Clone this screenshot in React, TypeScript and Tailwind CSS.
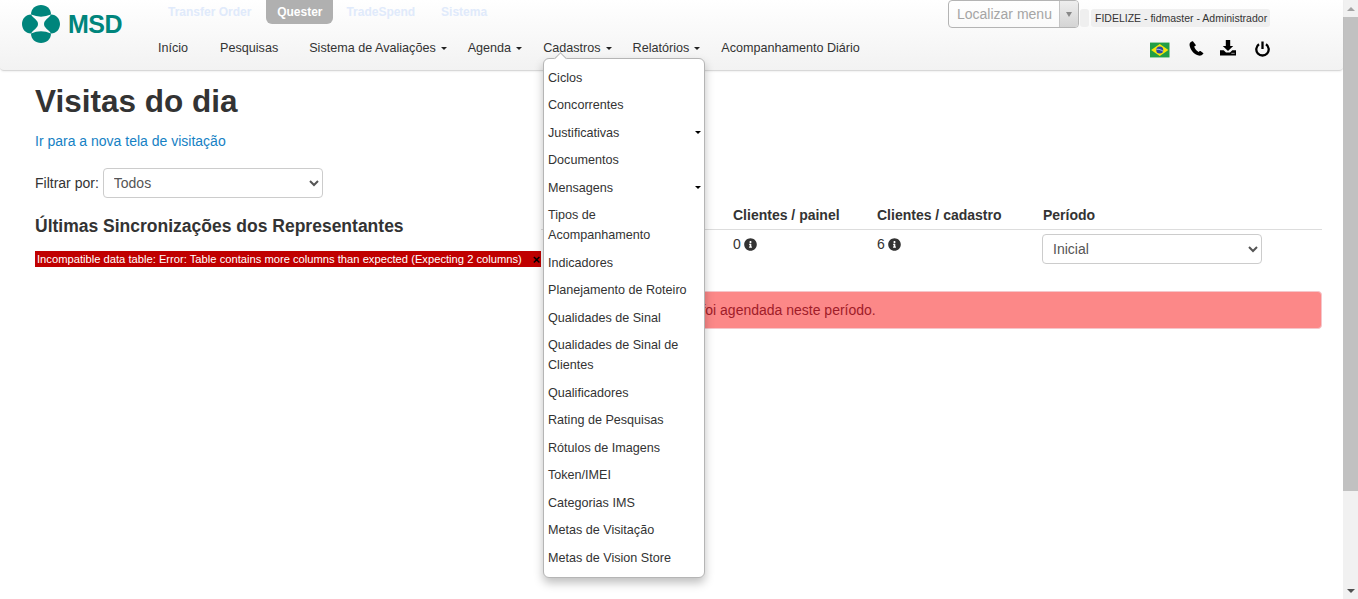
import { FaInfoCircle } from 'react-icons/fa';

const tabs = [
  { label: 'Transfer Order', cls: 'ml-[46px]' },
  { label: 'Quester', active: true, cls: 'ml-[15px]' },
  { label: 'TradeSpend', cls: 'ml-[13px]' },
  { label: 'Sistema', cls: 'ml-[26px]' },
];

const navItems = [
  { label: 'Início', cls: 'ml-[36px]' },
  { label: 'Pesquisas', cls: 'ml-[32px]' },
  { label: 'Sistema de Avaliações', caret: true, cls: 'ml-[31px]' },
  { label: 'Agenda', caret: true, cls: 'ml-[21px]' },
  { label: 'Cadastros', caret: true, cls: 'ml-[21px]' },
  { label: 'Relatórios', caret: true, cls: 'ml-[21px]' },
  { label: 'Acompanhamento Diário', cls: 'ml-[21px]' },
];

const menuItems = [
  { label: 'Ciclos' },
  { label: 'Concorrentes' },
  { label: 'Justificativas', sub: true },
  { label: 'Documentos' },
  { label: 'Mensagens', sub: true },
  { label: 'Tipos de Acompanhamento' },
  { label: 'Indicadores' },
  { label: 'Planejamento de Roteiro' },
  { label: 'Qualidades de Sinal' },
  { label: 'Qualidades de Sinal de Clientes' },
  { label: 'Qualificadores' },
  { label: 'Rating de Pesquisas' },
  { label: 'Rótulos de Imagens' },
  { label: 'Token/IMEI' },
  { label: 'Categorias IMS' },
  { label: 'Metas de Visitação' },
  { label: 'Metas de Vision Store' },
];

function Caret() {
  return <span className="ml-[5px] inline-block h-0 w-0 border-x-[3px] border-t-[3px] border-x-transparent border-t-[#222] align-middle" />;
}

function Logo() {
  return (
    <div className="flex items-center">
      <svg width="38" height="38" viewBox="0 0 38 38" className="shrink-0">
        <g fill="#00857c">
          <path d="M9 9.500C9 3.800 13.500 0 19 0s10 3.800 10 9.500Q19 13.800 9 9.500z" />
          <path d="M9 28.500C9 34.200 13.500 38 19 38s10-3.800 10-9.500Q19 24.200 9 28.500z" />
          <path d="M9 9.500C3.500 9.500 0 14 0 19s3.500 9.500 9 9.500C11 25 16 23 16 19S11 13 9 9.500z" />
          <path d="M29 9.500C34.500 9.500 38 14 38 19s-3.500 9.500-9 9.500C27 25 22 23 22 19S27 13 29 9.500z" />
        </g>
      </svg>
      <span className="ml-[8px] text-[25px] font-bold leading-none tracking-[-0.5px] text-[#00857c]">MSD</span>
    </div>
  );
}

function Flag() {
  return (
    <svg width="21" height="16" viewBox="0 0 21 16">
      <rect width="21" height="16" fill="#229e45" />
      <path d="M10.500 1.500 19.800 8l-9.300 6.500L1.200 8z" fill="#f8e509" />
      <circle cx="10.500" cy="8" r="3.800" fill="#2b49a3" />
      <path d="M7 7.300c2.500-.3 5 .5 7 2" stroke="#fff" strokeWidth="0.7" fill="none" />
    </svg>
  );
}

function PhoneIcon() {
  return (
    <svg width="15" height="15" viewBox="0 0 15 15">
      <path d="M3.200.2C1.300.8.200 2.400.6 4.400c.9 4.900 4.600 9 9.200 10.200 1.500.3 3.300-.3 4.500-1.800.2-.3.100-.6-.2-.8l-2.600-1.900c-.3-.2-.6-.2-.8 0l-1 1c-2.100-1-3.900-3.300-4.500-5.500l1.300-.9c.3-.2.4-.5.300-.8L4.100.5c-.1-.3-.6-.4-.9-.3z" fill="#000" />
    </svg>
  );
}

function DownloadIcon() {
  return (
    <svg width="16" height="16" viewBox="0 0 16 16">
      <path d="M5.800 0h4.400v6h3L8 11 2.800 6h3z" fill="#000" />
      <path d="M0 10.200h3.700L6 12.500h4l2.300-2.300H16V15.500H0z" fill="#000" />
      <rect x="11.600" y="12.800" width="1" height="1" fill="#fff" />
      <rect x="13.400" y="12.800" width="1" height="1" fill="#fff" />
    </svg>
  );
}

function PowerIcon() {
  return (
    <svg width="15" height="16" viewBox="0 0 15 16" fill="none" stroke="#000" strokeWidth="2.300">
      <path d="M7.500.5v7.500" />
      <path d="M4 3.200a6.200 6.200 0 1 0 7 0" />
    </svg>
  );
}

function CadastrosMenu() {
  return (
    <div className="absolute left-[543px] top-[58px] z-20 h-[520px] w-[162px] rounded-[6px] border border-[#b5b5b5] bg-white pt-[4.750px] text-[12.600px] text-[#333] shadow-[0_5px_10px_rgba(0,0,0,0.25)]">
      <span className="absolute left-[12px] top-[-5px] h-[9px] w-[9px] rotate-45 border-l border-t border-[#b5b5b5] bg-white" />
      {menuItems.map((item) => (
        <div key={item.label} className="relative py-[3.750px] pl-[4px] pr-[12px] leading-5">
          {item.label}
          {item.sub && (
            <span className="absolute right-[3px] top-[12px] h-0 w-0 border-x-[3px] border-t-[3px] border-x-transparent border-t-black" />
          )}
        </div>
      ))}
    </div>
  );
}

function Header() {
  return (
    <header className="relative h-[71px] rounded-b-[4px] border-b border-[#d8d8d8] bg-gradient-to-b from-white to-[#f2f2f2] shadow-[0_1px_2px_rgba(0,0,0,0.06)]">
      <div className="flex">
        <div className="ml-[22px] mt-[5px] w-[100px]">
          <Logo />
        </div>
        <div className="flex-1">
          <div className="flex h-[24px] items-center text-[12px] font-bold">
            {tabs.map((t) => (
              <span
                key={t.label}
                className={
                  t.active
                    ? `${t.cls} flex h-[24px] w-[67px] items-center justify-center rounded-b-[6px] bg-[#b0b0b0] text-white`
                    : `${t.cls} text-[#e0eafb]`
                }
              >
                {t.label}
              </span>
            ))}
          </div>
          <nav className="mt-[14px] flex h-[20px] items-center text-[12.600px] text-[#333]">
            {navItems.map((n) => (
              <span key={n.label} className={`${n.cls} whitespace-nowrap`}>
                {n.label}
                {n.caret && <Caret />}
              </span>
            ))}
          </nav>
        </div>
        <div className="mr-[73px] w-[322px]">
          <div className="flex items-start">
            <div className="flex h-[28px] w-[131px] overflow-hidden rounded-[4px] border border-[#b4b4b4]">
              <span className="flex-1 pl-[8px] text-[14px] leading-[26px] text-[#a5a5a5]">Localizar menu</span>
              <span className="flex w-[19px] items-center justify-center border-l border-[#c4c4c4] bg-gradient-to-b from-[#eeeeee] to-[#d4d4d4]">
                <span className="h-0 w-0 border-x-[3.500px] border-t-[5px] border-x-transparent border-t-[#888]" />
              </span>
            </div>
            <span className="ml-[1px] mt-[9px] h-[18px] w-[9px] rounded-[3px] bg-[#efefef]" />
            <span className="ml-[2px] mt-[9px] h-[18px] w-[179px] whitespace-nowrap rounded-[3px] bg-[#efefef] pl-[4px] text-[10.500px] leading-[18px] text-[#333]">
              FIDELIZE - fidmaster - Administrador
            </span>
          </div>
          <div className="mt-[14px] flex h-[16px] items-start pl-[202px]">
            <Flag />
            <span className="-mt-[1px] ml-[19.500px]"><PhoneIcon /></span>
            <span className="-mt-[2px] ml-[16px]"><DownloadIcon /></span>
            <span className="-mt-[1px] ml-[19px]"><PowerIcon /></span>
          </div>
        </div>
      </div>
    </header>
  );
}

function Content() {
  return (
    <main className="pl-[35px] pr-[21px] text-[14px] leading-5 text-[#333]">
      <h1 className="mt-[10px] text-[31.500px] font-bold leading-[40px]">Visitas do dia</h1>
      <a className="mt-[10px] block text-[#1581c4]">Ir para a nova tela de visitação</a>
      <div className="mt-[17px] flex items-center">
        <label>Filtrar por:</label>
        <select className="ml-[4px] h-[30px] w-[220px] rounded-[4px] border border-[#ccc] bg-white pl-[6px] text-[14px] text-[#555]">
          <option>Todos</option>
        </select>
      </div>
      <div className="flex">
        <div className="w-[506px] shrink-0">
          <h3 className="mt-[18px] text-[17.500px] font-bold leading-5">Últimas Sincronizações dos Representantes</h3>
          <div className="mt-[15px] flex h-[16px] items-center justify-between whitespace-nowrap bg-[#c00000] pl-[2px] pr-[1px] text-[11.200px] leading-[16px] text-white">
            <span>Incompatible data table: Error: Table contains more columns than expected (Expecting 2 columns)</span>
            <span className="text-[13px] font-bold leading-none text-black">×</span>
          </div>
        </div>
        <div className="flex-1 pt-[7px]">
          <div className="grid grid-cols-[192px_144px_166px_1fr] border-b border-[#ddd] pb-[4px] font-bold">
            <span />
            <span>Clientes / painel</span>
            <span>Clientes / cadastro</span>
            <span>Período</span>
          </div>
          <div className="grid h-[61px] grid-cols-[192px_144px_165px_1fr] pt-[4px]">
            <span />
            <span className="flex h-5 items-center gap-[3px]">0 <FaInfoCircle className="text-[13px] text-[#333]" /></span>
            <span className="flex h-5 items-center gap-[3px]">6 <FaInfoCircle className="text-[13px] text-[#333]" /></span>
            <select className="h-[30px] w-[220px] rounded-[4px] border border-[#ccc] bg-white pl-[6px] text-[14px] text-[#555]">
              <option>Inicial</option>
            </select>
          </div>
          <div className="ml-[5px] h-[38px] whitespace-nowrap rounded-[4px] border border-[#f5c6cb] bg-[#fc8888] pl-[54px] text-[14px] leading-[36px] text-[#a01c28]">
            Nenhuma visita foi agendada neste período.
          </div>
        </div>
      </div>
    </main>
  );
}

function Scrollbar() {
  return (
    <div className="flex h-[599px] w-[15px] shrink-0 flex-col items-center bg-[#f1f1f1]">
      <div className="flex h-[17px] items-center">
        <span className="h-0 w-0 border-x-[4px] border-b-[4px] border-x-transparent border-b-[#a3a3a3]" />
      </div>
      <div className="h-[474px] w-full bg-[#c1c1c1]" />
      <div className="mt-auto flex h-[17px] items-center">
        <span className="h-0 w-0 border-x-[4px] border-t-[4px] border-x-transparent border-t-[#505050]" />
      </div>
    </div>
  );
}

export default function App() {
  return (
    <div className="relative flex h-[599px] w-[1358px] overflow-hidden bg-white font-['Liberation_Sans',Arial,sans-serif]">
      <div className="min-w-0 flex-1">
        <Header />
        <Content />
      </div>
      <Scrollbar />
      <CadastrosMenu />
    </div>
  );
}
